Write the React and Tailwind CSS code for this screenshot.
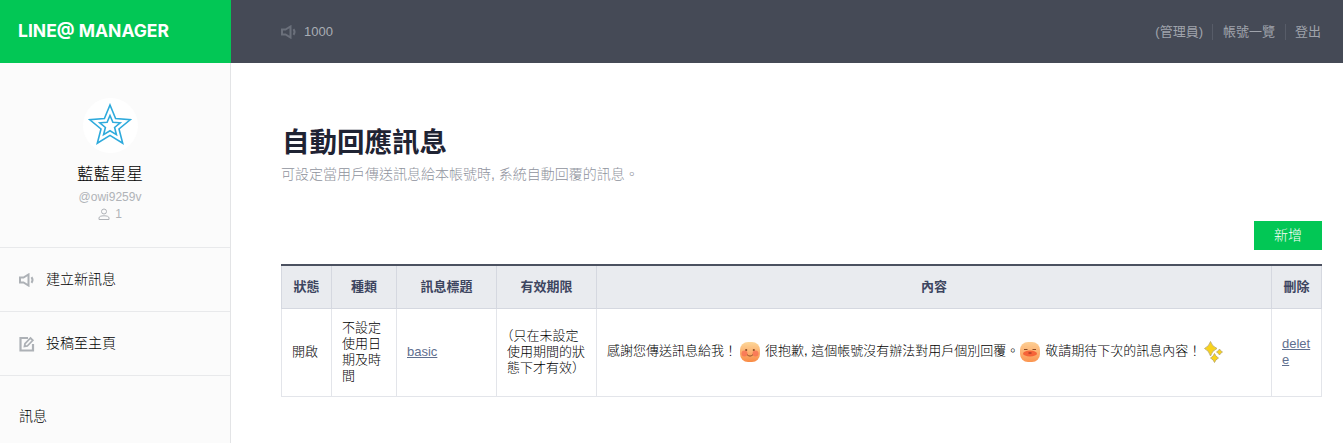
const font = { fontFamily: '"Liberation Sans","Noto Sans CJK TC",sans-serif' };

function Speaker({ className }) {
  return (
    <svg viewBox="0 0 16 14" className={className} fill="none" stroke="currentColor" strokeWidth="2">
      <path d="M1 4.500h3.500L9.500 1.500v11L4.500 9.500H1z" />
      <path d="M12.500 4.200c1.200 1.600 1.200 4 0 5.600" />
    </svg>
  );
}

function Star() {
  return (
    <svg viewBox="0 0 44 42" className="w-[44px] h-[42px] -mt-[3px]" fill="none" stroke="#2eaadc" strokeWidth="1.6" strokeLinejoin="miter">
      <path d="M22 2l5.600 13.600 14.800 1-11.400 9.400 3.700 14.200L22 32.400 9.300 40.200 13 26 1.600 16.600l14.800-1z" />
      <path d="M22 12.500l2.900 6.700 7.300.6-5.600 4.700 1.800 7.100L22 27.800l-6.400 3.800 1.800-7.100-5.600-4.700 7.300-.6z" />
    </svg>
  );
}

function Smile() {
  return (
    <svg viewBox="0 0 20 20" className="inline-block w-[20px] h-[20px] align-middle ml-[3px] mr-[5px]">
      <defs>
        <linearGradient id="g1" x1="0" y1="0" x2="0" y2="1">
          <stop offset="0" stopColor="#fdd79a" />
          <stop offset="1" stopColor="#f98b45" />
        </linearGradient>
      </defs>
      <rect width="20" height="20" rx="8" fill="url(#g1)" />
      <circle cx="4.500" cy="11.500" r="3" fill="#f7634f" opacity="0.650" />
      <circle cx="15.500" cy="11.500" r="3" fill="#f7634f" opacity="0.650" />
      <circle cx="6.200" cy="8" r="1.100" fill="#8a4a26" />
      <circle cx="13.800" cy="8" r="1.100" fill="#8a4a26" />
      <path d="M7 12.500c1.700 2 4.300 2 6 0" stroke="#8a4a26" strokeWidth="1" fill="none" />
    </svg>
  );
}

function Blush() {
  return (
    <svg viewBox="0 0 20 20" className="inline-block w-[20px] h-[20px] align-middle ml-[1px] mr-[5px]">
      <defs>
        <linearGradient id="g2" x1="0" y1="0" x2="0" y2="1">
          <stop offset="0" stopColor="#fdcf95" />
          <stop offset="1" stopColor="#fb9550" />
        </linearGradient>
      </defs>
      <rect width="20" height="20" rx="8" fill="url(#g2)" />
      <ellipse cx="10" cy="11.500" rx="7" ry="3" fill="#f4512c" opacity="0.800" />
      <path d="M4 7.500h3.500M12.500 7.500h3.500" stroke="#8a4a26" strokeWidth="1" />
      <path d="M8.500 11h3" stroke="#8a2b1e" strokeWidth="1" />
    </svg>
  );
}

function Sparkle() {
  return (
    <svg viewBox="0 0 20 22" className="inline-block w-[20px] h-[22px] align-middle ml-[3px]">
      <path d="M6.500 0.500Q8 5.500 13 7.500 8 9.500 6.500 15 5 9.500 0.500 7.500 5 5.500 6.500 0.500z" fill="#f8d21c" stroke="#b9a76a" strokeWidth="0.800" />
      <path d="M15.500 8Q16.500 10 18.500 11 16.500 12 15.500 14 14.500 12 12.500 11 14.500 10 15.500 8z" fill="#f8d21c" stroke="#b9a76a" strokeWidth="0.800" />
      <path d="M10.500 12.500Q11.500 15.500 14.500 17 11.500 18.500 10.500 21.500 9.500 18.500 6.500 17 9.500 15.500 10.500 12.500z" fill="#f8d21c" stroke="#b9a76a" strokeWidth="0.800" />
    </svg>
  );
}

const th = "border border-[#d5d8e0] border-t-0 font-bold text-[13px] text-[#3d4560] text-center align-middle p-0";
const td = "border border-[#e3e5ea] text-[13px] leading-[16px] font-light text-black align-middle px-[10px] py-[10px]";
const nav = "flex items-center shrink-0 h-[64px] border-b border-[#e8e9eb] px-[19px] text-[14px] font-light text-black";

export default function App() {
  return (
    <div style={font} className="w-[1343px] h-[443px] overflow-hidden bg-white flex flex-col">
      <header className="h-[63px] flex shrink-0 bg-[#454a56]">
        <div className="w-[231px] bg-[#02c755] flex items-center pl-[18px] text-white text-[17.500px] font-bold" style={{ fontFamily: '"Inter",sans-serif' }}>
          LINE@ MANAGER
        </div>
        <div className="flex-1 flex items-center pl-[50px] pr-[22px] text-[13px] text-[#a0a4ac]">
          <Speaker className="w-[16px] h-[14px] text-[#6b707b] mr-[7px]" />
          <span className="text-[#a9adb4] pt-[1px]">1000</span>
          <div className="ml-auto flex items-center text-[13px]">
            <span>(管理員)</span>
            <span className="w-px h-[16px] bg-[#575c68] ml-[9px] mr-[10px]" />
            <span>帳號一覽</span>
            <span className="w-px h-[16px] bg-[#575c68] ml-[10px] mr-[9px]" />
            <span>登出</span>
          </div>
        </div>
      </header>
      <div className="flex flex-1 min-h-0">
        <aside className="w-[231px] shrink-0 bg-[#fbfbfb] border-r border-[#e3e4e6] flex flex-col">
          <div className="h-[185px] shrink-0 border-b border-[#e8e9eb] flex flex-col items-center pt-[35px] pr-[10px]">
            <div className="w-[55px] h-[55px] rounded-full bg-white flex items-center justify-center">
              <Star />
            </div>
            <div className="mt-[9px] text-[16.500px] leading-[24px] font-light text-black">藍藍星星</div>
            <div className="mt-[3px] text-[12px] leading-[16px] text-[#b0b3b8]">@owi9259v</div>
            <div className="mt-[1px] flex items-center text-[12px] leading-[16px] text-[#b0b3b8]">
              <svg viewBox="0 0 12 12" className="w-[12px] h-[12px] mr-[5px]" fill="none" stroke="currentColor" strokeWidth="1">
                <circle cx="6" cy="3.500" r="2.500" />
                <path d="M1 11.500v-1.500c0-1.500 2-2.200 5-2.200s5 .7 5 2.200v1.500z" />
              </svg>
              1
            </div>
          </div>
          <div className={nav}>
            <Speaker className="w-[16px] h-[14px] text-[#adb1b6] mr-[11px]" />
            建立新訊息
          </div>
          <div className={nav}>
            <svg viewBox="0 0 16 16" className="w-[16px] h-[16px] text-[#adb1b6] mr-[11px]" fill="none" stroke="currentColor" strokeWidth="2.200">
              <path d="M9 2H1.500v12.500H14V8" />
              <path d="M5.500 10.500l.5-2.800L11.500 2l2.300 2.300-5.500 5.700z" strokeWidth="1.800" />
            </svg>
            投稿至主頁
          </div>
          <div className="flex items-center shrink-0 h-[80px] px-[19px] text-[14px] font-light text-black">訊息</div>
        </aside>
        <main className="flex-1 min-w-0 pl-[50px] pr-[21px] pt-[63px]">
          <h1 className="ml-[1px] text-[27.500px] leading-[34px] font-bold text-[#1f2333]">自動回應訊息</h1>
          <p className="mt-[4px] text-[14px] leading-[20px] font-light text-[#8f939d]">可設定當用戶傳送訊息給本帳號時, 系統自動回覆的訊息。</p>
          <div className="flex justify-end mt-[37px]">
            <button className="w-[68px] h-[29px] bg-[#02c755] text-white text-[14px] font-light">新增</button>
          </div>
          <table className="w-[1040px] mt-[14px] table-fixed border-collapse border-t-2 border-t-[#4b5160]">
            <colgroup>
              <col className="w-[50px]" />
              <col className="w-[65px]" />
              <col className="w-[100px]" />
              <col className="w-[100px]" />
              <col className="w-[675px]" />
              <col className="w-[50px]" />
            </colgroup>
            <thead>
              <tr className="h-[43px] bg-[#e9ebef]">
                <th className={th}>狀態</th>
                <th className={th}>種類</th>
                <th className={th}>訊息標題</th>
                <th className={th}>有效期限</th>
                <th className={th}>內容</th>
                <th className={th}>刪除</th>
              </tr>
            </thead>
            <tbody>
              <tr className="h-[88px]">
                <td className={td}>開啟</td>
                <td className={td}>不設定使用日期及時間</td>
                <td className={td}><a href="#" className="text-[#5f6f8f] underline">basic</a></td>
                <td className={`${td} [text-spacing-trim:trim-start]`}>（只在未設定使用期間的狀態下才有效）</td>
                <td className={td}>
                  感謝您傳送訊息給我！<Smile />很抱歉, 這個帳號沒有辦法對用戶個別回覆。<Blush />敬請期待下次的訊息內容！<Sparkle />
                </td>
                <td className={`${td} break-all`}><a href="#" className="text-[#5f6f8f] underline">delete</a></td>
              </tr>
            </tbody>
          </table>
        </main>
      </div>
    </div>
  );
}
